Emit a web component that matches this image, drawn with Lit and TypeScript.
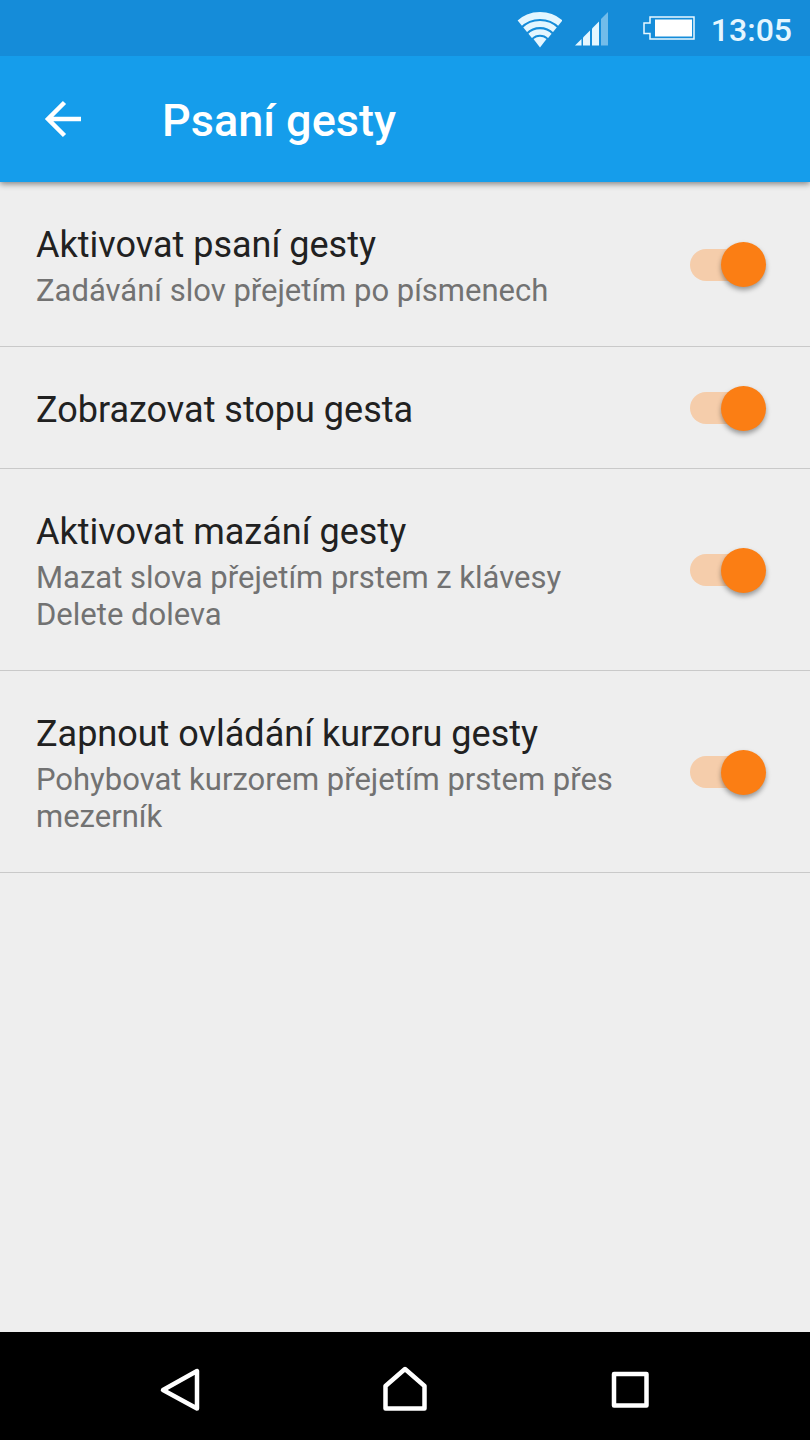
import { LitElement, html, css, nothing } from "lit";
import { customElement, property, state } from "lit/decorators.js";

interface Setting {
  id: string;
  title: string;
  summary?: string;
  on: boolean;
}

@customElement("status-bar")
class StatusBar extends LitElement {
  static styles = css`
    :host {
      display: flex;
      align-items: center;
      justify-content: flex-end;
      height: 56px;
      padding-right: 18px;
      background: #158cd9;
      color: #e4f6ff;
    }
    svg {
      display: block;
    }
    .wifi {
      margin-right: 12px;
    }
    .signal {
      margin-right: 34px;
    }
    .battery {
      margin-right: 16px;
    }
    .time {
      font-size: 32px;
      line-height: 38px;
      font-weight: 500;
      padding-top: 3px;
    }
  `;

  render() {
    return html`
      <svg class="wifi" width="46" height="40" viewBox="0 0 46 40" aria-hidden="true">
        <defs>
          <clipPath id="fan"><path d="M24 40 L-2 8 L-2 -4 L50 -4 L50 8 Z" /></clipPath>
        </defs>
        <g clip-path="url(#fan)" fill="none" stroke="currentColor">
          <circle cx="24" cy="38.5" r="31" stroke-width="7" />
          <circle cx="24" cy="38.5" r="22.5" stroke-width="6" />
          <circle cx="24" cy="38.5" r="14.5" stroke-width="5.5" />
        </g>
        <path d="M24 39.500 L17.500 31 Q24 26.500 30.500 31 Z" fill="currentColor" />
      </svg>
      <svg class="signal" width="35" height="36" viewBox="0 0 35 36" aria-hidden="true">
        <g fill="currentColor">
          <path d="M1 35.500 L7.500 29 V35.500 Z" />
          <path d="M9 35.500 V27.500 L16 20.500 V35.500 Z" />
          <path d="M18 35.500 V18.500 L25 11.500 V35.500 Z" />
          <path opacity=".45" d="M27 35.500 V9 L34 2 V35.500 Z" />
        </g>
      </svg>
      <svg class="battery" width="52" height="24" viewBox="0 0 52 24" aria-hidden="true">
        <path d="M7 1 H51 V23 H7 V17.500 H1 V7 H7 Z" fill="none" stroke="#e9f8ff" stroke-width="1.500" />
        <rect x="12" y="3.500" width="37" height="17" fill="#fff" />
      </svg>
      <span class="time">13:05</span>
    `;
  }
}

@customElement("setting-row")
class SettingRow extends LitElement {
  @property({ attribute: false }) setting!: Setting;

  static styles = css`
    :host {
      display: block;
      border-bottom: 1px solid #c9c9c9;
    }
    .row {
      display: flex;
      align-items: center;
      gap: 36px;
      padding: 38px 44px 37px 36px;
      cursor: pointer;
    }
    .text {
      flex: 1;
      min-width: 0;
      padding-top: 4px;
    }
    .title,
    .summary {
      display: block;
    }
    .title {
      font-size: 36px;
      line-height: 42px;
      color: #212121;
    }
    .summary {
      margin-top: 6px;
      font-size: 31px;
      line-height: 37px;
      color: #727272;
    }
    .switch {
      appearance: none;
      flex: none;
      display: flex;
      align-items: center;
      width: 76px;
      height: 32px;
      margin: 0;
      border-radius: 16px;
      background: linear-gradient(#c4c4c4, #c4c4c4) left / 70px 32px no-repeat;
      cursor: pointer;
    }
    .switch::before {
      content: "";
      flex: none;
      width: 45px;
      height: 45px;
      border-radius: 50%;
      background: #fafafa;
      box-shadow: 0 3px 5px rgba(0, 0, 0, 0.36);
    }
    .switch:checked {
      justify-content: flex-end;
      background-image: linear-gradient(#f5cdab, #f5cdab);
    }
    .switch:checked::before {
      background: #fb7e14;
    }
  `;

  render() {
    const { id, title, summary, on } = this.setting;
    return html`
      <label class="row" for=${id}>
        <span class="text">
          <span class="title">${title}</span>
          ${summary ? html`<span class="summary">${summary}</span>` : nothing}
        </span>
        <input class="switch" type="checkbox" role="switch" id=${id} .checked=${on} />
      </label>
    `;
  }
}

@customElement("navigation-bar")
class NavigationBar extends LitElement {
  static styles = css`
    :host {
      display: grid;
      grid-template-columns: repeat(3, 1fr);
      height: 108px;
      padding: 0 68px;
      background: #000;
    }
    button {
      display: flex;
      align-items: center;
      justify-content: center;
      padding: 8px 0 0;
      border: 0;
      background: none;
      color: #fff;
    }
    svg {
      display: block;
      fill: none;
      stroke: currentColor;
      stroke-width: 4.5;
      stroke-linejoin: round;
    }
  `;

  render() {
    return html`
      <button aria-label="Zpět">
        <svg width="48" height="48" viewBox="0 0 48 48"><path d="M7 24 L41 5 V42.500 Z" /></svg>
      </button>
      <button aria-label="Domů">
        <svg width="48" height="48" viewBox="0 0 48 48"><path d="M24 3 L43.500 20 V42.500 H4.500 V20 Z" /></svg>
      </button>
      <button aria-label="Přehled">
        <svg width="48" height="48" viewBox="0 0 48 48"><path d="M8 8 H40.500 V39.500 H8 Z" /></svg>
      </button>
    `;
  }
}

@customElement("app-root")
class AppRoot extends LitElement {
  @state() private settings: Setting[] = [
    { id: "typing", title: "Aktivovat psaní gesty", summary: "Zadávání slov přejetím po písmenech", on: true },
    { id: "trail", title: "Zobrazovat stopu gesta", on: true },
    { id: "delete", title: "Aktivovat mazání gesty", summary: "Mazat slova přejetím prstem z klávesy Delete doleva", on: true },
    { id: "cursor", title: "Zapnout ovládání kurzoru gesty", summary: "Pohybovat kurzorem přejetím prstem přes mezerník", on: true },
  ];

  static styles = css`
    :host {
      display: flex;
      flex-direction: column;
      min-height: 100vh;
      background: #eee;
      font-family: Roboto, "Noto Sans", sans-serif;
    }
    header {
      display: flex;
      align-items: center;
      gap: 66px;
      height: 126px;
      padding: 0 36px;
      background: #159deb;
      color: #fff;
      box-shadow: 0 2px 6px rgba(0, 0, 0, 0.45);
      clip-path: inset(0 0 -12px 0);
    }
    .back {
      display: block;
      padding: 0;
      border: 0;
      background: none;
      color: inherit;
    }
    .back svg {
      display: block;
    }
    h1 {
      margin: 0;
      padding-top: 4px;
      font-size: 45px;
      line-height: 52px;
      font-weight: 500;
    }
    main {
      flex: 1;
    }
  `;

  render() {
    return html`
      <status-bar></status-bar>
      <header>
        <button class="back" aria-label="Zpět">
          <svg width="60" height="54" viewBox="0 0 60 54" fill="none" stroke="currentColor" stroke-width="4.500">
            <path d="M45 27 H12 M28.500 10.500 L12 27 L28.500 43.500" />
          </svg>
        </button>
        <h1>Psaní gesty</h1>
      </header>
      <main>${this.settings.map((s) => html`<setting-row .setting=${s}></setting-row>`)}</main>
      <navigation-bar></navigation-bar>
    `;
  }
}
